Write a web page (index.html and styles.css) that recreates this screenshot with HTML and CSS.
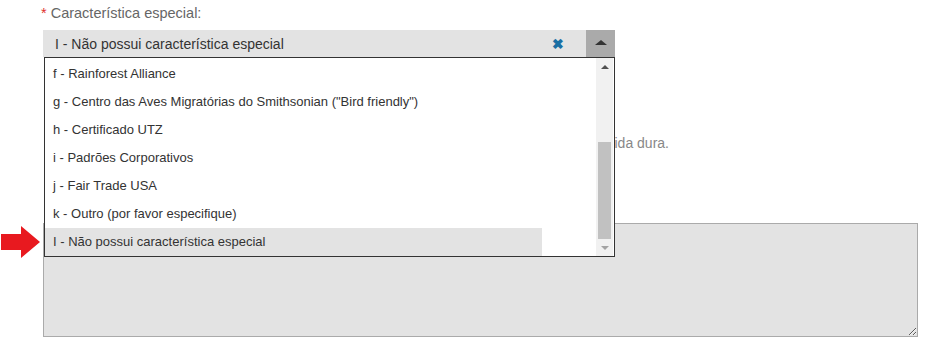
FILE: index.html
```html
<!DOCTYPE html>
<html lang="pt">
<head>
  <meta charset="UTF-8">
  <title>Característica especial</title>
  <link rel="stylesheet" href="styles.css">
</head>
<body>

<div class="form">
  <div class="field">
    <label class="field-label"><span class="req">*</span> Característica especial:</label>
    <div class="select-wrap">
      <div class="select">
        <span class="select-value">I - Não possui característica especial</span>
        <span class="select-clear">&#10006;</span>
        <span class="select-arrow"><span class="tri-up"></span></span>
      </div>

      <div class="dropdown">
        <ul class="options">
          <li>f - Rainforest Alliance</li>
          <li>g - Centro das Aves Migratórias do Smithsonian ("Bird friendly")</li>
          <li>h - Certificado UTZ</li>
          <li>i - Padrões Corporativos</li>
          <li>j - Fair Trade USA</li>
          <li>k - Outro (por favor especifique)</li>
          <li class="active">I - Não possui característica especial</li>
        </ul>
        <div class="scrollbar">
          <span class="sb-btn"><span class="sb-up"></span></span>
          <div class="sb-track"><div class="sb-thumb"></div></div>
          <span class="sb-btn"><span class="sb-down"></span></span>
        </div>
      </div>
    </div>
  </div>

  <p class="hint">Descreva outras características do café, por exemplo bebida mole, bebida dura.</p>

  <div class="text-row">
    <svg class="pointer" width="41" height="34" viewBox="0 0 41 34">
      <path d="M1 9 H21 V1 L40 17 L21 33 V25 H1 Z" fill="#e8191f"/>
    </svg>
    <textarea class="notes"></textarea>
  </div>
</div>

</body>
</html>
```

FILE: styles.css
```css
body {
  margin: 0;
  font-family: "Liberation Sans", Arial, sans-serif;
  font-size: 14px;
  color: #333;
  background: #fff;
}

.form {
  padding: 5px 12px 0 43px;
}

.field-label {
  display: block;
  margin-left: -2px;
  height: 25px;
  color: #666;
  font-size: 14.5px;
}

.req {
  color: #e0312b;
}

.select-wrap {
  position: relative;
  width: 572px;
}

.select {
  display: flex;
  align-items: center;
  height: 27px;
  background: #e3e3e3;
}

.select-value {
  flex: 1;
  padding-left: 12px;
  color: #333;
}

.select-clear {
  color: #1a6fa3;
  font-size: 14px;
  font-weight: bold;
  margin-right: 22px;
}

.select-arrow {
  display: flex;
  align-items: center;
  justify-content: center;
  width: 29px;
  height: 27px;
  background: #aaa;
}

.tri-up {
  width: 0;
  height: 0;
  border-left: 6px solid transparent;
  border-right: 6px solid transparent;
  border-bottom: 5px solid #333;
  margin-bottom: 2px;
}

.dropdown {
  position: absolute;
  top: 27px;
  left: 1px;
  width: 569px;
  height: 198px;
  display: flex;
  background: #fff;
  border: 1px solid #333;
  z-index: 5;
}

.options {
  list-style: none;
  margin: 0;
  padding: 2px 0 0 0;
  flex: 1;
}

.options li {
  height: 28px;
  line-height: 28px;
  padding-left: 8px;
  font-size: 13px;
  color: #333;
  white-space: nowrap;
}

.options li.active {
  background: #e3e3e3;
  width: 489px;
}

.scrollbar {
  width: 17px;
  display: flex;
  flex-direction: column;
  background: #f1f1f1;
  margin-right: 1px;
}

.sb-btn {
  height: 17px;
  display: flex;
  align-items: center;
  justify-content: center;
}

.sb-up, .sb-down {
  width: 0;
  height: 0;
  border-left: 4px solid transparent;
  border-right: 4px solid transparent;
}

.sb-up {
  border-bottom: 4px solid #505050;
}

.sb-down {
  border-top: 4px solid #a3a3a3;
}

.sb-track {
  flex: 1;
  display: flex;
  flex-direction: column;
  justify-content: flex-end;
  padding: 0 2px;
}

.sb-thumb {
  height: 97px;
  background: #c1c1c1;
}

.hint {
  margin: 0;
  padding-top: 71px;
  width: 626px;
  height: 30px;
  line-height: 30px;
  text-align: right;
  white-space: nowrap;
  color: #888;
}

.text-row {
  position: relative;
  margin-top: 65px;
}

.pointer {
  position: absolute;
  left: -43px;
  top: 2px;
}

.notes {
  display: block;
  box-sizing: border-box;
  width: 875px;
  height: 114px;
  margin: 0;
  background: #e3e3e3;
  border: 1px solid #aaa;
  border-radius: 0;
  resize: both;
}
```
